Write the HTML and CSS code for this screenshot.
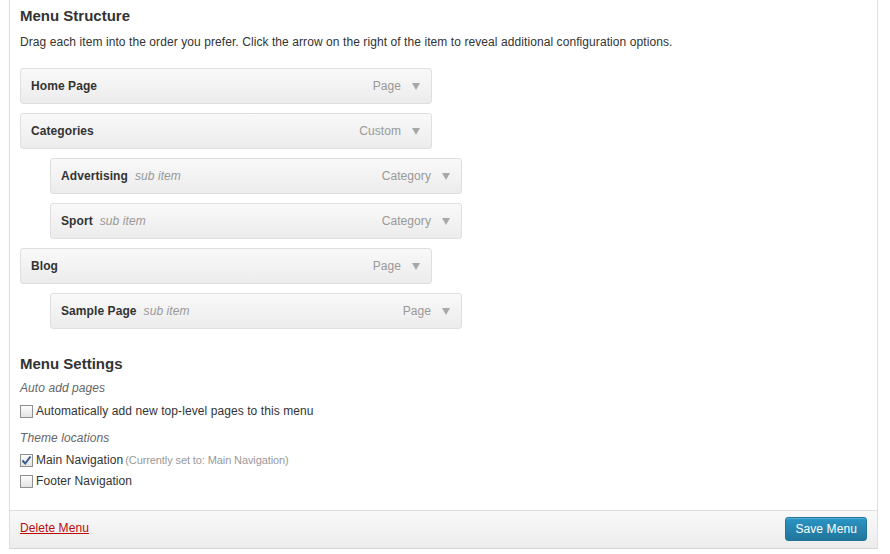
FILE: index.html
```html
<!DOCTYPE html>
<html>
<head>
<meta charset="utf-8">
<link rel="stylesheet" href="styles.css">
</head>
<body>
<div class="panel">
  <div class="body">
    <h3 class="heading">Menu Structure</h3>
    <p class="desc">Drag each item into the order you prefer. Click the arrow on the right of the item to reveal additional configuration options.</p>
    <ul class="menu">
      <li class="item"><span class="title">Home Page</span><span class="type">Page</span><svg class="arrow" width="8" height="7" viewBox="0 0 8 7"><polygon points="0,0 8,0 4,7" fill="#a8a8a8"/></svg></li>
      <li class="item"><span class="title">Categories</span><span class="type">Custom</span><svg class="arrow" width="8" height="7" viewBox="0 0 8 7"><polygon points="0,0 8,0 4,7" fill="#a8a8a8"/></svg></li>
      <li class="item sub"><span class="title">Advertising</span><span class="subnote">sub item</span><span class="type">Category</span><svg class="arrow" width="8" height="7" viewBox="0 0 8 7"><polygon points="0,0 8,0 4,7" fill="#a8a8a8"/></svg></li>
      <li class="item sub"><span class="title">Sport</span><span class="subnote">sub item</span><span class="type">Category</span><svg class="arrow" width="8" height="7" viewBox="0 0 8 7"><polygon points="0,0 8,0 4,7" fill="#a8a8a8"/></svg></li>
      <li class="item"><span class="title">Blog</span><span class="type">Page</span><svg class="arrow" width="8" height="7" viewBox="0 0 8 7"><polygon points="0,0 8,0 4,7" fill="#a8a8a8"/></svg></li>
      <li class="item sub"><span class="title">Sample Page</span><span class="subnote">sub item</span><span class="type">Page</span><svg class="arrow" width="8" height="7" viewBox="0 0 8 7"><polygon points="0,0 8,0 4,7" fill="#a8a8a8"/></svg></li>
    </ul>
    <h3 class="heading settings">Menu Settings</h3>
    <div class="group-label">Auto add pages</div>
    <label class="check first"><span class="box"></span>Automatically add new top-level pages to this menu</label>
    <div class="group-label theme">Theme locations</div>
    <label class="check loc main"><span class="box checked"><svg width="11" height="11" viewBox="0 0 11 11"><path d="M1.5 5.5 L4.2 8.5 L9.5 1.5" fill="none" stroke="#3a5a8c" stroke-width="2"/></svg></span>Main Navigation <span class="note">(Currently set to: Main Navigation)</span></label>
    <label class="check loc"><span class="box"></span>Footer Navigation</label>
  </div>
  <div class="footer">
    <a class="delete" href="#">Delete Menu</a>
    <button class="save" type="button">Save Menu</button>
  </div>
</div>
</body>
</html>
```
FILE: styles.css
```css
html, body {
  margin: 0;
  padding: 0;
  background: #fff;
}
body {
  font-family: "Liberation Sans", Arial, sans-serif;
  font-size: 12px;
  color: #333;
  letter-spacing: 0.08px;
}
.panel {
  margin-left: 9px;
  width: 869px;
  box-sizing: border-box;
  border: 1px solid #dfdfdf;
  border-top: none;
  border-bottom-color: #d4d4d4;
  box-shadow: 0 1px 1px rgba(0,0,0,0.04);
}
.body {
  padding: 0 10px 19px;
}
.heading {
  margin: 0;
  padding-top: 6px;
  font-size: 15px;
  line-height: 19px;
  font-weight: bold;
  color: #333;
  letter-spacing: 0;
}
.desc {
  margin: 8px 0 0;
  line-height: 18px;
  color: #333;
}
.menu {
  list-style: none;
  margin: 17px 0 0;
  padding: 0;
}
.item {
  display: flex;
  align-items: center;
  width: 412px;
  height: 36px;
  box-sizing: border-box;
  border: 1px solid #dfdfdf;
  border-radius: 3px;
  background: linear-gradient(to bottom, #f9f9f9, #ececec);
  padding: 0 11px 0 10px;
  margin-bottom: 9px;
}
.item.sub {
  margin-left: 30px;
}
.title {
  font-weight: bold;
  color: #333;
}
.subnote {
  font-style: italic;
  color: #999;
  margin-left: 7px;
}
.type {
  margin-left: auto;
  color: #999;
}
.arrow {
  margin-left: 11px;
  display: block;
}
.settings {
  padding-top: 16px;
}
.group-label {
  margin-top: 6px;
  line-height: 18px;
  font-style: italic;
  color: #666;
}
.group-label.theme {
  margin-top: 9px;
}
.check {
  display: flex;
  align-items: center;
  line-height: 18px;
  color: #333;
}
.check.first {
  margin-top: 5px;
}
.check.loc {
  height: 21px;
}
.check.main {
  margin-top: 2px;
}
.box {
  display: inline-flex;
  align-items: center;
  justify-content: center;
  width: 13px;
  height: 13px;
  box-sizing: border-box;
  border: 1px solid #8f8f8f;
  background: linear-gradient(to bottom, #fdfdfd, #e3e3e3);
  margin-right: 3px;
  margin-top: 1px;
}
.box svg {
  display: block;
}
.note {
  font-size: 11px;
  letter-spacing: -0.1px;
  color: #999;
  margin-left: 2px;
}
.footer {
  display: flex;
  align-items: center;
  justify-content: space-between;
  height: 38px;
  box-sizing: border-box;
  border-top: 1px solid #dfdfdf;
  background: linear-gradient(to bottom, #f9f9f9, #ececec);
  padding: 0 10px;
}
.delete {
  color: #bc0b0b;
  text-decoration: underline;
  font-size: 12px;
  margin-top: -3px;
}
.save {
  font-family: "Liberation Sans", Arial, sans-serif;
  font-size: 12px;
  letter-spacing: 0.1px;
  color: #fff;
  height: 24px;
  padding: 0 9px;
  border: 1px solid #21759b;
  border-radius: 3px;
  background: linear-gradient(to bottom, #2a95c5, #21759b);
  box-shadow: inset 0 1px 0 rgba(120,200,230,0.5);
  margin-top: -1px;
}
```
